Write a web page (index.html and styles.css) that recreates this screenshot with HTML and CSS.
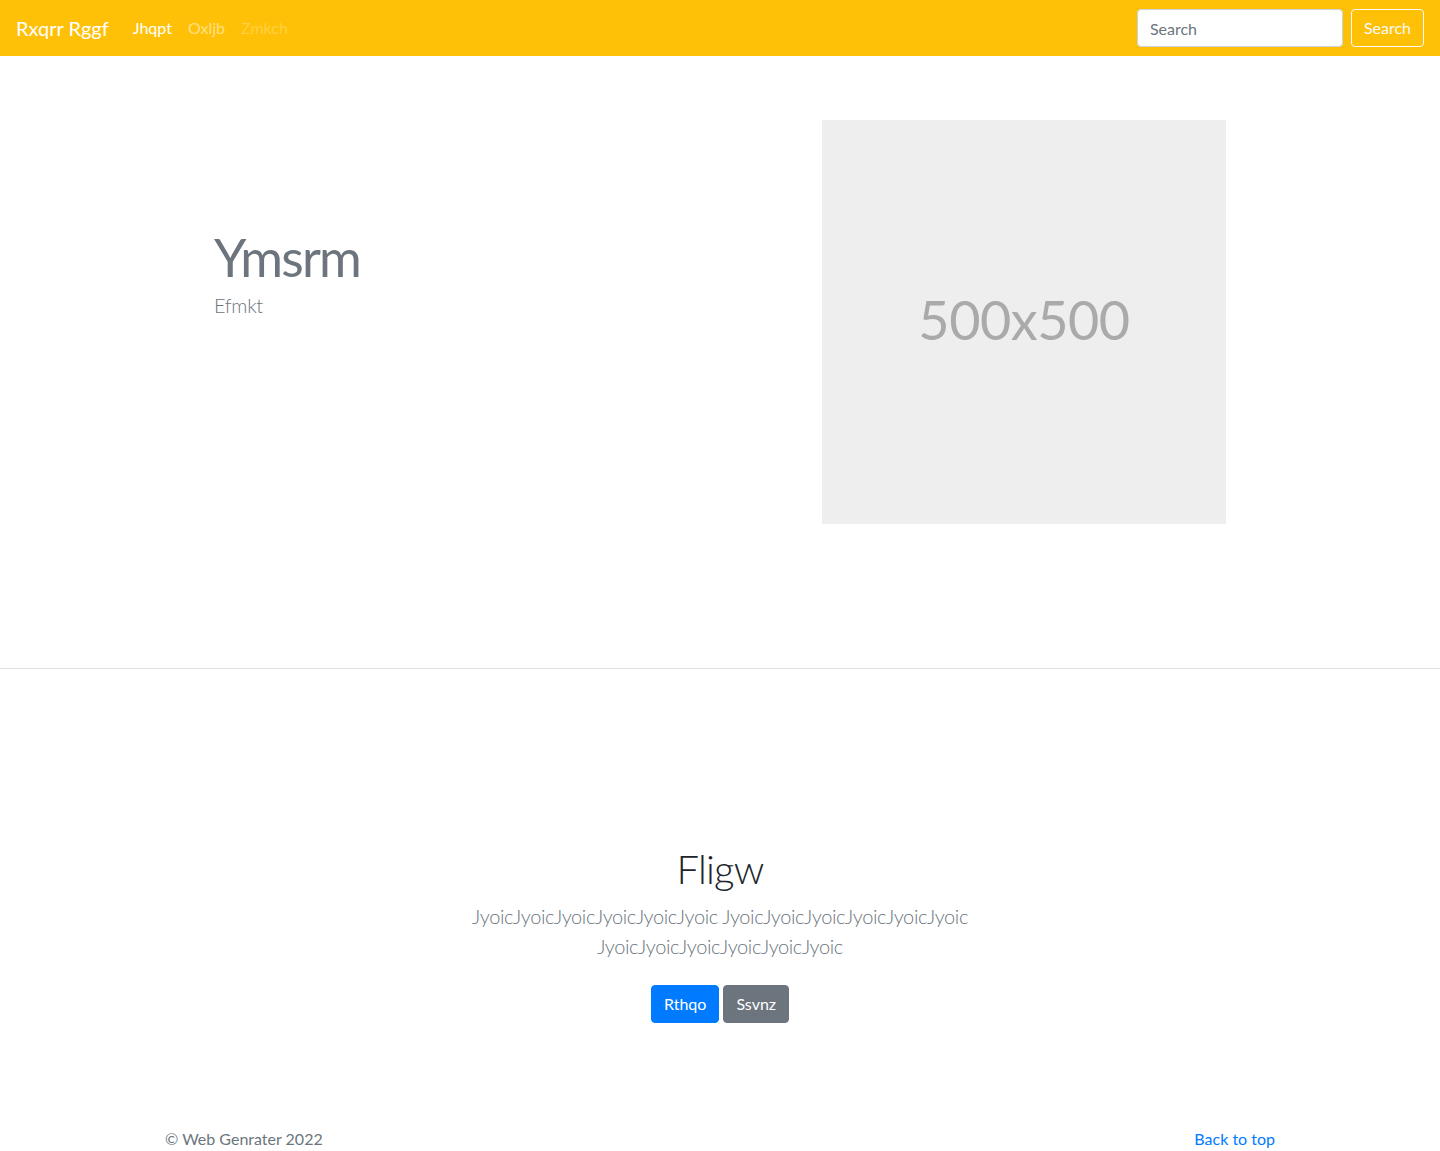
FILE: index.html
```html
<!DOCTYPE html>
<html lang="en">
<head>
<meta charset="utf-8">
<title>Rxqrr Rggf</title>
<link rel="stylesheet" href="styles.css">
</head>
<body>
<nav class="navbar">
  <a class="brand" href="#">Rxqrr Rggf</a>
  <ul class="nav">
    <li><a class="nav-link active" href="#">Jhqpt</a></li>
    <li><a class="nav-link" href="#">Oxljb</a></li>
    <li><a class="nav-link disabled" href="#">Zmkch</a></li>
  </ul>
  <form class="search">
    <input class="search-input" type="text" placeholder="Search">
    <button class="btn btn-outline-light" type="button">Search</button>
  </form>
</nav>

<section class="hero">
  <div class="container hero-row">
    <div class="hero-text">
      <h1 class="hero-title">Ymsrm</h1>
      <p class="hero-lead">Efmkt</p>
    </div>
    <div class="hero-media">
      <div class="placeholder">500x500</div>
    </div>
  </div>
</section>

<section class="intro">
  <h1 class="intro-title">Fligw</h1>
  <p class="intro-lead">JyoicJyoicJyoicJyoicJyoicJyoic JyoicJyoicJyoicJyoicJyoicJyoic JyoicJyoicJyoicJyoicJyoicJyoic</p>
  <div class="actions">
    <a class="btn btn-primary" href="#">Rthqo</a>
    <a class="btn btn-secondary" href="#">Ssvnz</a>
  </div>
</section>

<footer class="footer">
  <div class="container footer-row">
    <p class="copy">© Web Genrater 2022</p>
    <a class="top-link" href="#">Back to top</a>
  </div>
</footer>
</body>
</html>
```

FILE: styles.css
```css
* { box-sizing: border-box; }
html, body { margin: 0; padding: 0; }
body {
  font-family: "Lato", "Liberation Sans", sans-serif;
  font-size: 16px;
  line-height: 1.5;
  color: #212529;
  background: #fff;
}
a { text-decoration: none; }

.navbar {
  height: 56px;
  background: #ffc107;
  display: flex;
  align-items: center;
  padding: 8px 16px;
}
.brand {
  color: #fff;
  font-size: 20px;
  line-height: 30px;
  margin-right: 16px;
}
.nav {
  list-style: none;
  display: flex;
  margin: 0;
  padding: 0;
  flex: 1;
}
.nav-link {
  display: block;
  padding: 8px;
  color: rgba(255,255,255,.5);
}
.nav-link.active { color: #fff; }
.nav-link.disabled { color: rgba(255,255,255,.25); }

.search { display: flex; align-items: center; }
.search-input {
  width: 206px;
  height: 38px;
  padding: 6px 12px;
  border: 1px solid #ced4da;
  border-radius: 4px;
  font: inherit;
  color: #495057;
  background: #fff;
}
.search-input::placeholder { color: #6c757d; }

.btn {
  display: inline-block;
  font-family: inherit;
  font-size: 16px;
  line-height: 24px;
  padding: 6px 12px;
  border: 1px solid transparent;
  border-radius: 4px;
  cursor: pointer;
}
.btn-outline-light {
  margin-left: 8px;
  background: transparent;
  color: #f8f9fa;
  border-color: #f8f9fa;
}
.btn-primary { background: #007bff; border-color: #007bff; color: #fff; }
.btn-secondary { background: #6c757d; border-color: #6c757d; color: #fff; }

.container {
  width: 1140px;
  margin: 0 auto;
}

.hero {
  padding: 64px 0 144px;
  border-bottom: 1px solid #dee2e6;
}
.hero-row {
  display: grid;
  grid-template-columns: 570px 570px;
}
.hero-text {
  padding: 104px 0 0 64px;
}
.hero-title {
  margin: 0;
  font-size: 52px;
  font-weight: 400;
  letter-spacing: -1.8px;
  line-height: 67px;
  color: #6c757d;
}
.hero-lead {
  margin: -1px 0 0;
  font-size: 20px;
  font-weight: 300;
  letter-spacing: -0.3px;
  line-height: 30px;
  color: #6c757d;
}
.hero-media { padding-left: 102px; }
.placeholder {
  width: 404px;
  height: 404px;
  padding-bottom: 6px;
  background: #eee;
  color: #aaa;
  font-size: 54px;
  letter-spacing: -0.5px;
  display: flex;
  align-items: center;
  justify-content: center;
}

.intro {
  text-align: center;
  padding: 176px 0 56px;
}
.intro-title {
  margin: 0 0 8px;
  font-size: 40px;
  font-weight: 300;
  letter-spacing: -0.8px;
  line-height: 48px;
  color: #212529;
}
.intro-lead {
  max-width: 540px;
  margin: 0 auto 24px;
  font-size: 20px;
  font-weight: 300;
  letter-spacing: -0.4px;
  line-height: 30px;
  color: #6c757d;
}
.actions { font-size: 0; display: flex; justify-content: center; gap: 4px; }

.footer { padding: 48px 0; }
.footer-row {
  display: flex;
  justify-content: space-between;
  padding: 0 15px;
}
.copy { margin: 0; color: #6c757d; }
.top-link { color: #007bff; }
```
